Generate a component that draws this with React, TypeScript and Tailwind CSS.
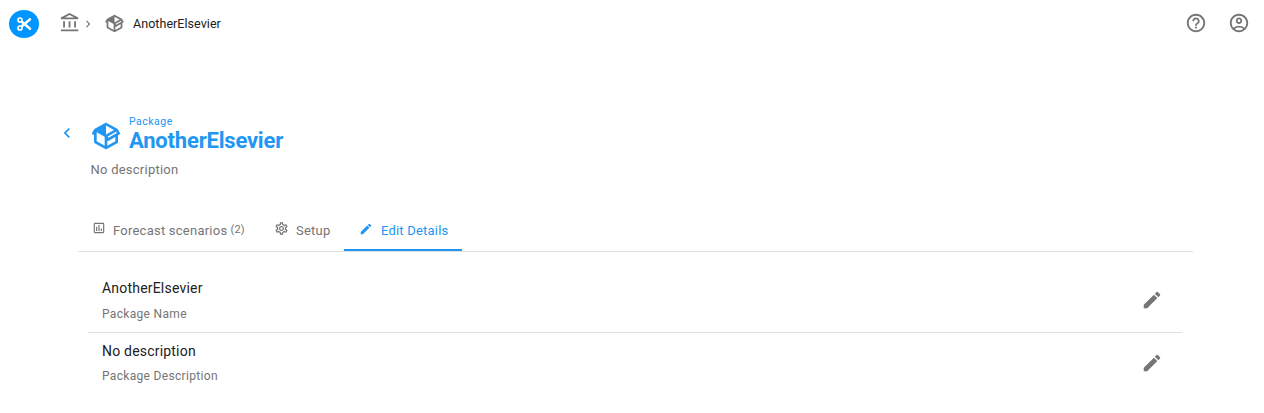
import React from "react";
import {
  MdOutlineAccountBalance,
  MdHelpOutline,
  MdOutlineAccountCircle,
  MdOutlineAssessment,
  MdOutlineSettings,
  MdEdit,
  MdChevronLeft,
  MdChevronRight,
} from "react-icons/md";

function ScissorsIcon({ className }: { className: string }) {
  return (
    <svg viewBox="0 0 15 14" fill="none" stroke="currentColor" strokeLinecap="round" className={className}>
      <circle cx="3" cy="3" r="2" strokeWidth="1.7" />
      <circle cx="3" cy="11" r="2" strokeWidth="1.7" />
      <path d="M4.8 4.7L13 11.7M4.8 9.3L13 2.3" strokeWidth="2.5" />
    </svg>
  );
}

function PackageIcon({ className }: { className: string }) {
  return (
    <svg viewBox="0 0 24 24" fill="currentColor" className={className}>
      <path d="M2,10.96C1.5,10.68 1.35,10.07 1.63,9.59L3.13,7C3.24,6.8 3.41,6.66 3.6,6.58L11.43,2.18C11.59,2.06 11.79,2 12,2C12.21,2 12.41,2.06 12.57,2.18L20.47,6.62C20.66,6.72 20.82,6.88 20.91,7.08L22.36,9.6C22.64,10.08 22.47,10.69 22,10.96L21,11.54V16.5C21,16.88 20.79,17.21 20.47,17.38L12.57,21.82C12.41,21.94 12.21,22 12,22C11.79,22 11.59,21.94 11.43,21.82L3.53,17.38C3.21,17.21 3,16.88 3,16.5V10.96C2.7,11.13 2.32,11.14 2,10.96M12,4.15V10.85L17.96,7.5L12,4.15M5,15.91L11,19.29V12.58L5,9.21V15.91M19,15.91V12.69L14,15.59C13.67,15.77 13.3,15.76 13,15.6V19.29L19,15.91M13.85,13.36L20.13,9.73L19.55,8.72L13.27,12.35L13.85,13.36Z" />
    </svg>
  );
}

type DetailRowProps = { value: string; label: string; className: string; labelClassName: string; iconClassName: string };

function DetailRow({ value, label, className, labelClassName, iconClassName }: DetailRowProps) {
  return (
    <div className={`flex justify-between pr-[19.5px] pl-[14px] ${className}`}>
      <div className="flex flex-col">
        <span className="text-[14px] leading-[22px] tracking-[0.2px] text-[#212121]">{value}</span>
        <span className={`text-[12px] leading-5 tracking-[0.32px] text-[#757575] ${labelClassName}`}>{label}</span>
      </div>
      <MdEdit className={`size-[22px] text-[#757575] ${iconClassName}`} />
    </div>
  );
}

export default function App() {
  return (
    <div className="h-[413px] w-full overflow-hidden bg-white font-[Roboto,sans-serif]">
      <header className="flex h-12 items-center pr-[14px] pl-[9px] text-[#757575]">
        <div className="flex h-[28px] w-[30px] items-center justify-center rounded-[50%] bg-[#0095ff] text-white">
          <ScissorsIcon className="h-[14px] w-[15px]" />
        </div>
        <MdOutlineAccountBalance className="mb-[3px] ml-5 size-[22px]" />
        <MdChevronRight className="mb-px size-[14px]" />
        <PackageIcon className="mb-[2px] ml-[9px] size-[21px]" />
        <span className="ml-[8px] text-[12.5px] tracking-[0.05px] text-[#212121]">AnotherElsevier</span>
        <MdHelpOutline className="mb-[2px] ml-auto size-[22px]" />
        <MdOutlineAccountCircle className="mb-[2px] ml-[21px] size-[22px]" />
      </header>

      <section className="mt-[67px] flex pl-[56.5px] text-[#2196f3]">
        <MdChevronLeft className="mt-2 size-5" />
        <PackageIcon className="mt-[5px] ml-[13.5px] size-[32px]" />
        <div className="ml-[7px] flex h-[45px] flex-col">
          <span className="text-[10.5px] leading-[13px] tracking-[0.5px]">Package</span>
          <h1 className="text-[22px] leading-[26px] font-bold tracking-[-0.2px]">AnotherElsevier</h1>
        </div>
      </section>
      <p className="ml-[90.5px] text-[13px] leading-[20px] tracking-[0.24px] text-[#757575]">No description</p>

      <nav className="mt-[29px] mr-[71px] ml-[78px] flex h-[43px] border-b border-[#e0e0e0] text-[13px] tracking-[0.24px] text-[#757575]">
        <div className="flex h-[42px] w-[182px] items-center pl-[14px]">
          <MdOutlineAssessment className="mb-[4px] size-[14px]" />
          <span className="mt-px ml-[7px]">Forecast scenarios</span>
          <span className="ml-[3px] text-[11px]">(2)</span>
        </div>
        <div className="flex h-[42px] w-[84px] items-center pl-[14px]">
          <MdOutlineSettings className="mb-[4px] size-[15px]" />
          <span className="mt-px ml-[7px]">Setup</span>
        </div>
        <div className="flex h-[42px] w-[118px] items-center border-b-2 border-[#2196f3] pl-[15px] text-[#2196f3]">
          <MdEdit className="size-[14px]" />
          <span className="mt-[3px] ml-[8px] tracking-[0.2px]">Edit Details</span>
        </div>
      </nav>

      <main className="mt-[17px] mr-[82px] ml-[88px]">
        <DetailRow
          value="AnotherElsevier"
          label="Package Name"
          className="h-[64px] border-b border-[#e0e0e0] pt-[8px]"
          labelClassName="mt-[5px]"
          iconClassName="mt-[12px]"
        />
        <DetailRow
          value="No description"
          label="Package Description"
          className="h-[61px] pt-[7px]"
          labelClassName="mt-[4px]"
          iconClassName="mt-[12px]"
        />
      </main>
    </div>
  );
}
